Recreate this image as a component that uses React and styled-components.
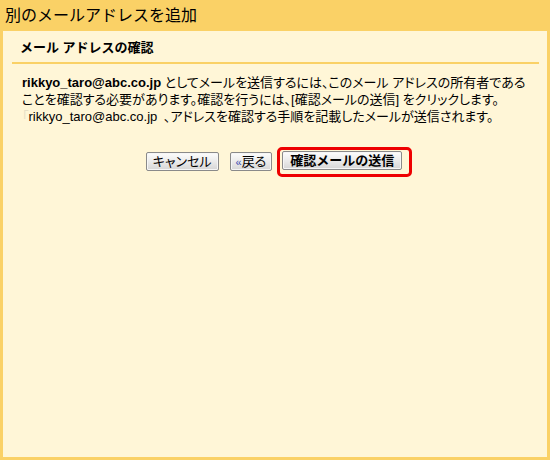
import React from 'react';
import styled, { createGlobalStyle } from 'styled-components';

const GlobalStyle = createGlobalStyle`
  html, body {
    margin: 0;
    padding: 0;
    background: #fad166;
  }
  body {
    font-family: "Liberation Sans", Arial, "Noto Sans CJK JP", sans-serif;
    color: #000;
  }
`;

const Frame = styled.div`
  width: 550px;
  height: 460px;
  display: flex;
  flex-direction: column;
  background: #fad166;
  box-sizing: border-box;
`;

const TitleBar = styled.div`
  height: 31px;
  flex-shrink: 0;
  padding-left: 5px;
  display: flex;
  align-items: center;
  font-size: 16px;
  line-height: 20px;
`;

const Panel = styled.div`
  flex: 1;
  margin: 0 3px 3px 3px;
  padding: 0 8px 0 9px;
  background: #fff6d7;
  display: flex;
  flex-direction: column;
`;

const Heading = styled.div`
  padding: 9px 8px 6px;
  font-size: 13px;
  line-height: 16px;
  font-weight: bold;
  border-bottom: 2px solid #fad166;
`;

const Message = styled.p`
  margin: 10px 0 0;
  padding-left: 10px;
  font-size: 13px;
  line-height: 17px;
  white-space: nowrap;
  font-feature-settings: "palt";
`;

const Email = styled.span`
  font-weight: ${p => (p.$bold ? 'bold' : 'normal')};
`;

const Ghost = styled.span`
  color: ${p => p.$tint};
`;

const ButtonRow = styled.div`
  margin-top: 22px;
  display: flex;
  align-items: flex-start;
  justify-content: center;
  padding-left: 7px;
`;

const Button = styled.button`
  height: 19px;
  margin: 5px 0 0;
  padding: 0 ${p => p.$pad || '6px'};
  font-family: inherit;
  font-size: 13px;
  font-weight: ${p => (p.$primary ? 'bold' : 'normal')};
  line-height: 15px;
  color: #000;
  background: linear-gradient(#fdfdfd, #e9e9e9 55%, #d6d6d6);
  border: 1px solid #8a8a8a;
  border-radius: 2px;
  box-shadow: inset 0 0 0 1px #f6f6f6;
  white-space: nowrap;
  font-feature-settings: ${p => (p.$primary ? 'normal' : '"palt"')};
  & + & {
    margin-left: 11px;
  }
`;

const Highlight = styled.div`
  margin-left: 5px;
  padding: 1px 7px 4px 2px;
  border: 3px solid #ee0000;
  border-radius: 5px;
  display: flex;

  ${Button} {
    margin: 0;
    padding: 0 7px;
  }
`;

const Guillemet = styled.span`
  color: #3b4bb0;
  font-size: 11px;
`;

export default function App() {
  return (
    <>
      <GlobalStyle />
      <Frame>
        <TitleBar>別のメールアドレスを追加</TitleBar>
        <Panel>
          <Heading>メール アドレスの確認</Heading>
          <Message>
            <Email $bold>rikkyo_taro@abc.co.jp</Email> としてメールを送信するには、このメール アドレスの所有者である
            <br />
            ことを確認する必要があります。確認を行うには、[確認メールの送信] をクリックします。
            <br />
            <Ghost $tint="#e6dfc6">「</Ghost>
            <Email>rikkyo_taro@abc.co.jp</Email>
            <Ghost $tint="#fff6d7">」</Ghost>、アドレスを確認する手順を記載したメールが送信されます。
          </Message>
          <ButtonRow>
            <Button>キャンセル</Button>
            <Button $pad="5px">
              <Guillemet>«</Guillemet>戻る
            </Button>
            <Highlight>
              <Button $primary>確認メールの送信</Button>
            </Highlight>
          </ButtonRow>
        </Panel>
      </Frame>
    </>
  );
}
